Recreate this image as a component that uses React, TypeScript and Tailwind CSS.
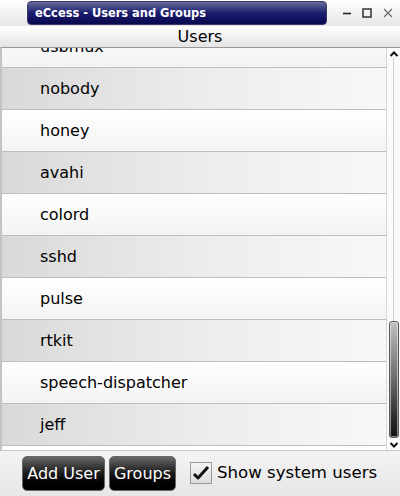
import React from 'react';

const users = ['usbmux', 'nobody', 'honey', 'avahi', 'colord', 'sshd', 'pulse', 'rtkit', 'speech-dispatcher', 'jeff', 'user'];

const font = { fontFamily: '"DejaVu Sans", Verdana, sans-serif' };

export default function App() {
  return (
    <div className="w-[400px] h-[496px] flex flex-col overflow-hidden bg-[#f2f2f2] text-black" style={font}>
      {/* Title bar */}
      <div className="h-[26px] shrink-0 flex items-center bg-gradient-to-b from-[#ffffff] to-[#e6e6e6]">
        <div className="ml-[27px] w-[300px] h-[24px] rounded-[4px] bg-gradient-to-b from-[#6a6a9a] via-[#1c1c6e] to-[#08084e] border border-[#3a3a6a] flex items-center pl-[7px]">
          <span className="text-white font-bold text-[12.7px] leading-none font-['DejaVu_Sans_Condensed','DejaVu_Sans',sans-serif]">eCcess - Users and Groups</span>
        </div>
        <div className="flex-1 flex items-center justify-around pl-[10px] pr-[2px]">
          <svg width="10" height="10" viewBox="0 0 10 10"><path d="M1 5.5h8" stroke="#222" strokeWidth="1.6" /></svg>
          <svg width="10" height="10" viewBox="0 0 10 10"><rect x="1" y="1" width="8" height="8" fill="none" stroke="#333" strokeWidth="1.5" /></svg>
          <svg width="10" height="10" viewBox="0 0 10 10"><path d="M1 1l8 8M9 1l-8 8" stroke="#666" strokeWidth="1.1" /></svg>
        </div>
      </div>

      {/* Header */}
      <div className="h-[21px] shrink-0 flex items-center justify-center bg-gradient-to-b from-[#ffffff] to-[#e4e4e4] text-[16px] leading-none">
        Users
      </div>

      {/* List */}
      <div className="h-[404px] shrink-0 flex border-t border-[#9a9a9a] border-b border-b-[#c8c8c8] border-l-2 border-l-[#c4c4c4] bg-white">
        <div className="flex-1 overflow-hidden">
          <div className="-mt-[23px] flex flex-col">
            {users.map((u, i) => (
              <div
                key={u}
                className={`h-[42px] flex items-center pl-[38px] text-[16px] border-t border-[#bdbdbd] ${
                  i % 2 === 1
                    ? 'bg-gradient-to-r from-[#d9d9d9] via-[#ececec] to-[#f8f8f8]'
                    : 'bg-gradient-to-b from-[#ffffff] to-[#f3f3f3]'
                }`}
              >
                {u}
              </div>
            ))}
          </div>
        </div>
        {/* Scrollbar */}
        <div className="w-[14px] shrink-0 flex flex-col items-center bg-[#fbfbfb] border-l border-[#d8d8d8]">
          <svg width="10" height="8" viewBox="0 0 10 8" className="mt-[2px]"><path d="M1.5 6L5 2.5 8.5 6" fill="none" stroke="#111" strokeWidth="2" /></svg>
          <div className="flex-1 w-[1px] bg-[#cfcfcf]" />
          <div className="w-[10px] h-[117px] rounded-[3px] border border-[#555] bg-gradient-to-b from-[#c0c0c0] via-[#6a6a6a] to-[#111] shadow-[inset_0_0_0_1px_rgba(255,255,255,0.5)]" />
          <svg width="10" height="8" viewBox="0 0 10 8" className="mt-[3px] mb-[1px]"><path d="M1.5 2L5 5.5 8.5 2" fill="none" stroke="#111" strokeWidth="2" /></svg>
        </div>
      </div>

      {/* Bottom bar */}
      <div className="flex-1 flex items-center pl-[22px] gap-[4px] bg-gradient-to-b from-[#f4f4f4] to-[#e6e6e6]">
        <button className="h-[35px] w-[83px] px-0 rounded-[5px] border border-[#666] bg-gradient-to-b from-[#6a6a6a] via-[#1a1a1a] to-[#000] text-white text-[16px] whitespace-nowrap">
          Add User
        </button>
        <button className="h-[35px] w-[67px] px-0 rounded-[5px] border border-[#666] bg-gradient-to-b from-[#6a6a6a] via-[#1a1a1a] to-[#000] text-white text-[16px] whitespace-nowrap">
          Groups
        </button>
        <div className="ml-[10px] flex items-center gap-[5px]">
          <div className="w-[22px] h-[22px] border border-[#9a9a9a] bg-gradient-to-b from-[#f4f4f4] to-[#dcdcdc] flex items-center justify-center">
            <svg width="18" height="16" viewBox="0 0 18 16"><path d="M2 9l4 4L16 2" fill="none" stroke="#111" strokeWidth="3" strokeLinejoin="round" /></svg>
          </div>
          <span className="text-[16.6px]">Show system users</span>
        </div>
      </div>
    </div>
  );
}
